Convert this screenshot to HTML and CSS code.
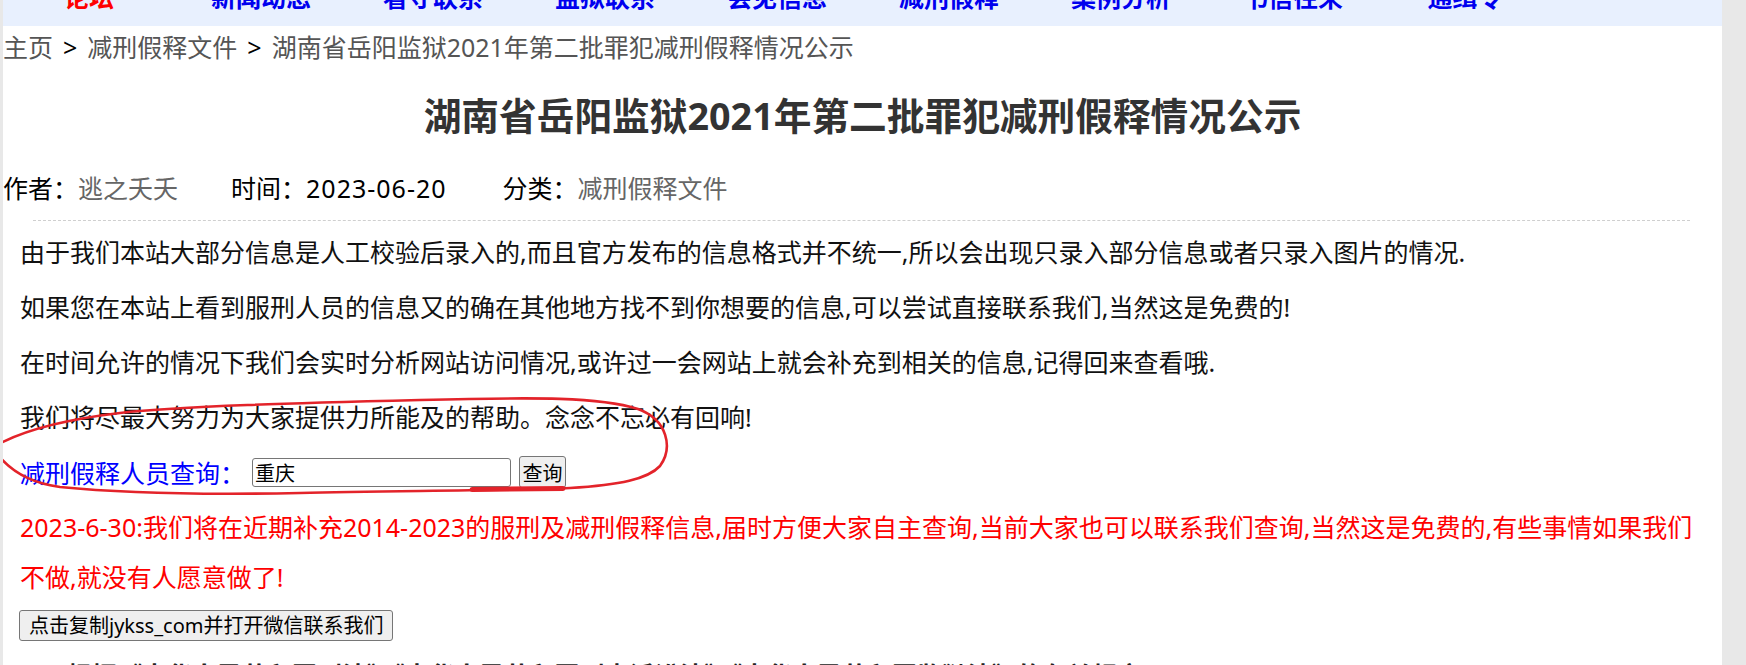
FILE: index.html
```html
<!DOCTYPE html>
<html lang="zh-CN">
<head>
<meta charset="utf-8">
<title>湖南省岳阳监狱2021年第二批罪犯减刑假释情况公示</title>
<link rel="stylesheet" href="styles.css">
</head>
<body>
<div class="page">
  <nav class="nav">
    <ul class="nav-list">
      <li class="nav-item nav-item-active">论坛</li>
      <li class="nav-item">新闻动态</li>
      <li class="nav-item">看守联系</li>
      <li class="nav-item">监狱联系</li>
      <li class="nav-item">会见信息</li>
      <li class="nav-item">减刑假释</li>
      <li class="nav-item">案例分析</li>
      <li class="nav-item">书信往来</li>
      <li class="nav-item">通缉令</li>
    </ul>
  </nav>

  <div class="crumbs"><a class="crumb">主页</a><span class="sep">&gt;</span><a class="crumb">减刑假释文件</a><span class="sep">&gt;</span><a class="crumb">湖南省岳阳监狱2021年第二批罪犯减刑假释情况公示</a></div>

  <h1 class="title">湖南省岳阳监狱2021年第二批罪犯减刑假释情况公示</h1>

  <div class="meta">
    <span class="meta-item">作者：<span class="meta-val">逃之夭夭</span></span>
    <span class="meta-item meta-item-date">时间：<span class="meta-date">2023-06-20</span></span>
    <span class="meta-item">分类：<span class="meta-val">减刑假释文件</span></span>
  </div>

  <div class="rule"></div>

  <div class="content">
    <p class="para">由于我们本站大部分信息是人工校验后录入的,而且官方发布的信息格式并不统一,所以会出现只录入部分信息或者只录入图片的情况.</p>
    <p class="para">如果您在本站上看到服刑人员的信息又的确在其他地方找不到你想要的信息,可以尝试直接联系我们,当然这是免费的!</p>
    <p class="para">在时间允许的情况下我们会实时分析网站访问情况,或许过一会网站上就会补充到相关的信息,记得回来查看哦.</p>
    <p class="para">我们将尽最大努力为大家提供力所能及的帮助。念念不忘必有回响!</p>
    <div class="query">
      <span class="query-label">减刑假释人员查询：</span>
      <input class="query-input" type="text" value="重庆">
      <button class="query-btn" type="button">查询</button>
    </div>
    <p class="para para-red">2023-6-30:我们将在近期补充2014-2023的服刑及减刑假释信息,届时方便大家自主查询,当前大家也可以联系我们查询,当然这是免费的,有些事情如果我们不做,就没有人愿意做了!</p>
    <button class="copy-btn" type="button">点击复制jykss_com并打开微信联系我们</button>
    <p class="para para-bold">根据《中华人民共和国刑法》《中华人民共和国刑事诉讼法》《中华人民共和国监狱法》的有关规定</p>
  </div>

  <svg class="scribble" width="700" height="520" viewBox="0 0 700 520" aria-hidden="true">
    <path d="M -5 446 C 20 432, 60 420, 120 413 S 300 403, 420 400 S 600 397, 638 409 C 668 420, 673 448, 660 466 C 648 479, 620 485, 570 488 C 520 490, 400 491, 300 493 S 120 493, 60 487 C 30 483, 10 470, -2 455" fill="none" stroke="#e3232a" stroke-width="2.6" stroke-linecap="round"/>
    <path d="M 472 489.5 L 563 488.5" fill="none" stroke="#e3232a" stroke-width="5" stroke-linecap="round"/>
  </svg>
</div>
</body>
</html>
```

FILE: styles.css
```css
html, body {
  margin: 0;
  padding: 0;
  overflow: hidden;
}

body {
  background: #e8e8e8;
  font-family: "Noto Sans", "Noto Sans CJK SC", sans-serif;
  color: #111;
}

.page {
  position: relative;
  margin-left: 3px;
  width: 1719px;
  height: 665px;
  background: #fff;
  overflow: hidden;
}

.nav {
  height: 26px;
  background: #e8f0fe;
  overflow: hidden;
}

.nav-list {
  list-style: none;
  margin: -23px 0 0 0;
  padding: 0;
  display: flex;
}

.nav-item {
  width: 172px;
  text-align: center;
  font-size: 25px;
  line-height: 40px;
  font-weight: bold;
  color: #0000ee;
}

.nav-item-active {
  color: #ff0000;
}

.crumbs {
  height: 42px;
  line-height: 42px;
  font-size: 25px;
  color: #555;
  white-space: nowrap;
}

.crumb {
  color: #555;
}

.sep {
  color: #000;
  margin: 0 10px;
}

.title {
  margin: 20px 0 0 0;
  text-align: center;
  font-size: 37.7px;
  line-height: 56px;
  font-weight: bold;
  color: #333;
}

.meta {
  margin-top: 24px;
  height: 40px;
  line-height: 40px;
  font-size: 25px;
  color: #000;
  display: flex;
  white-space: nowrap;
}

.meta-item {
  margin-right: 53px;
}

.meta-item-date {
  margin-right: 56px;
}

.meta-date {
  letter-spacing: 1px;
}

.meta-val {
  color: #666;
}

.rule {
  margin: 12px 32px 0 30px;
  border-top: 1px dashed #cfcfcf;
}

.content {
  padding: 6px 18px 0 17px;
}

.para {
  margin: 0 0 5px 0;
  font-size: 25px;
  line-height: 50px;
  color: #111;
}

.query {
  height: 50px;
  display: flex;
  align-items: center;
  font-size: 25px;
}

.query-label {
  color: #0000ff;
  margin-right: 7px;
}

.query-input {
  box-sizing: border-box;
  width: 259px;
  height: 29px;
  margin: 0 8px 0 0;
  padding: 0 2px;
  border: 1px solid #767676;
  border-radius: 3px;
  font-family: "Noto Sans", "Noto Sans CJK SC", sans-serif;
  font-size: 20px;
  color: #000;
  background: #fff;
}

.query-btn {
  box-sizing: border-box;
  width: 47px;
  height: 32px;
  margin: 0;
  padding: 0;
  border: 1px solid #767676;
  border-radius: 3px;
  background: #efefef;
  font-family: "Noto Sans", "Noto Sans CJK SC", sans-serif;
  font-size: 20px;
  color: #000;
}

.para-red {
  margin-top: 5px;
  color: #ff0000;
}

.copy-btn {
  display: block;
  box-sizing: border-box;
  height: 31px;
  margin: 8px 0 0 -1px;
  padding: 0 9px;
  border: 1px solid #767676;
  border-radius: 3px;
  background: #efefef;
  font-family: "Noto Sans", "Noto Sans CJK SC", sans-serif;
  font-size: 20px;
  line-height: 27px;
  color: #000;
  white-space: nowrap;
}

.para-bold {
  margin-top: 9px;
  padding-left: 47px;
  font-weight: bold;
  color: #222;
  white-space: nowrap;
}

.scribble {
  position: absolute;
  left: -3px;
  top: 0;
  pointer-events: none;
}
```
